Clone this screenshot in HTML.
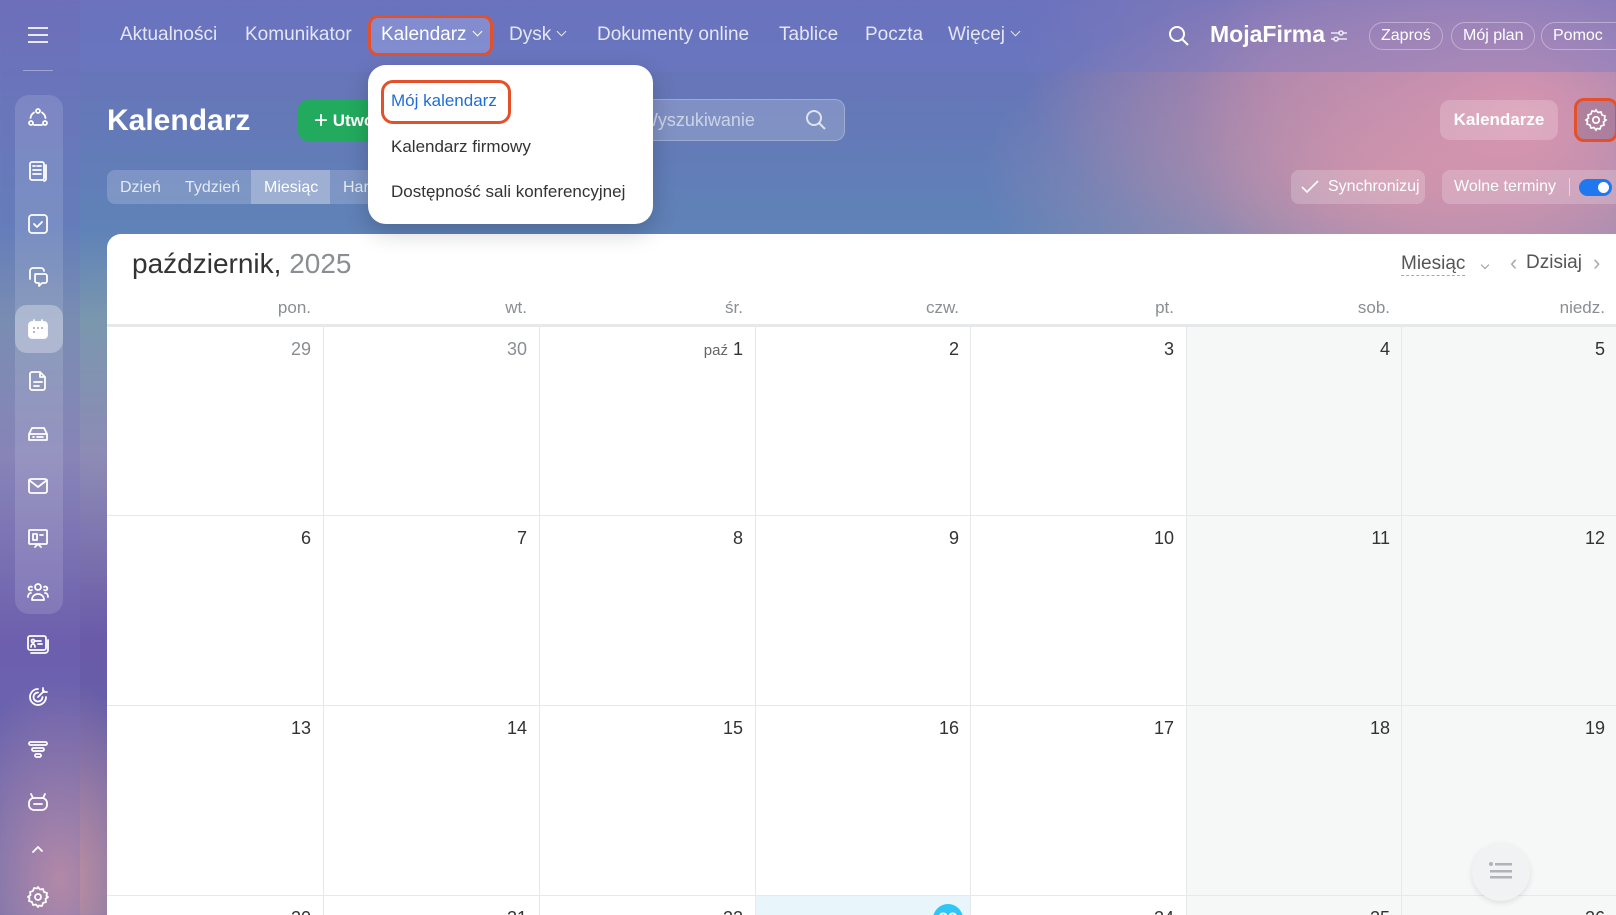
<!DOCTYPE html>
<html style="overflow:hidden;width:1616px;height:915px"><head><meta charset="utf-8"><style>
*{box-sizing:border-box;margin:0;padding:0}
body{width:1616px;height:915px;overflow:hidden;position:relative;font-family:"Liberation Sans",sans-serif;
background:
radial-gradient(ellipse 330px 260px at 1520px 120px,rgba(220,150,175,.95),rgba(200,140,170,0) 100%),
radial-gradient(ellipse 420px 200px at 1400px 180px,rgba(215,150,165,.8),rgba(200,140,170,0) 100%),
radial-gradient(ellipse 260px 180px at 1280px 60px,rgba(170,130,170,.7),rgba(170,130,170,0)),
radial-gradient(ellipse 120px 200px at 60px 880px,rgba(210,150,160,.9),rgba(210,150,160,0)),
linear-gradient(180deg,#6a6fb8 0%,#5f82b8 25%,#7a97ae 35%,#8d8bb5 50%,#6a5aa8 70%,#5a6aa8 100%);}
.top{position:absolute;left:80px;top:0;right:0;height:72px;background:rgba(110,120,200,.35)}
.side{position:absolute;left:0;top:0;width:80px;height:915px;background:rgba(120,110,190,.25)}
.nav{position:absolute;top:24px;font-size:19px;color:rgba(255,255,255,.82);white-space:nowrap}
.chev{display:inline-block;width:7px;height:7px;border-right:1.5px solid currentColor;border-bottom:1.5px solid currentColor;transform:rotate(45deg);margin-left:7px;position:relative;top:-5px}
.pill{position:absolute;top:22px;height:28px;border:1px solid rgba(255,255,255,.35);border-radius:14px;color:#fff;font-size:16px;line-height:26px;padding:0 11px;white-space:nowrap}
.ic{position:absolute;left:26px;width:24px;height:24px}
.ic svg{width:24px;height:24px;fill:none;stroke:#fff;stroke-width:1.8;stroke-linecap:round;stroke-linejoin:round}
.card{position:absolute;left:107px;top:234px;width:1509px;height:681px;background:#fff;border-radius:14px 0 0 0;overflow:hidden}
.dn{position:absolute;top:64px;font-size:17px;color:#8a8e93;text-align:right;width:204px}
.cell{position:absolute;border-left:1px solid #e6e8ea;border-top:1px solid #e6e8ea;height:190px;width:216px}
.num{position:absolute;right:12px;top:12px;font-size:18px;color:#333}
</style></head><body>
<div class="side"></div>
<div class="top"></div>
<div style="position:absolute;left:28px;top:27px;width:20px;height:16px;border-top:2px solid #fff;border-bottom:2px solid #fff;opacity:.85"><div style="margin-top:5px;height:2px;background:#fff"></div></div>
<div style="position:absolute;left:23px;top:70px;width:30px;height:1px;background:rgba(255,255,255,.35)"></div>
<div style="position:absolute;left:15px;top:95px;width:48px;height:519px;border-radius:14px;background:rgba(255,255,255,.13)"></div>
<div style="position:absolute;left:15px;top:305px;width:48px;height:48px;border-radius:12px;background:rgba(255,255,255,.3)"></div>
<div class="ic" style="top:106px"><svg viewBox="0 0 24 24"><circle cx="12" cy="5" r="2"/><circle cx="5" cy="17" r="2"/><circle cx="19" cy="17" r="2"/><path d="M8 6.5A8 8 0 0 0 4.5 12M16 6.5A8 8 0 0 1 19.5 12M8 19h8"/></svg></div>
<div class="ic" style="top:159px"><svg viewBox="0 0 24 24"><rect x="4" y="3" width="14" height="18" rx="2"/><path d="M20 6v14a2 2 0 0 1-2 2M7 7h2M11 7h4M7 11h8M7 15h8"/></svg></div>
<div class="ic" style="top:212px"><svg viewBox="0 0 24 24"><rect x="3" y="3" width="18" height="18" rx="3"/><path d="M8 12l3 3 5-5"/></svg></div>
<div class="ic" style="top:264px"><svg viewBox="0 0 24 24"><path d="M4 15V7a3 3 0 0 1 3-3h8a3 3 0 0 1 3 3M9 10h10a2 2 0 0 1 2 2v5a2 2 0 0 1-2 2h-3l-3 3v-3h-2a2 2 0 0 1-2-2v-5a2 2 0 0 1 2-2z"/></svg></div>
<div class="ic" style="top:317px"><svg viewBox="0 0 24 24"><rect x="3" y="5" width="18" height="16" rx="3" fill="#fff"/><path d="M8 3v4M16 3v4"/><circle cx="8" cy="11" r="1" fill="#a89fc5" stroke="none"/><circle cx="12" cy="11" r="1" fill="#a89fc5" stroke="none"/><circle cx="16" cy="11" r="1" fill="#a89fc5" stroke="none"/><circle cx="8" cy="15" r="1" fill="#a89fc5" stroke="none"/></svg></div>
<div class="ic" style="top:369px"><svg viewBox="0 0 24 24"><path d="M6 3h8l5 5v11a2 2 0 0 1-2 2H6a2 2 0 0 1-2-2V5a2 2 0 0 1 2-2zM14 3v5h5M8 13h8M8 17h5"/></svg></div>
<div class="ic" style="top:422px"><svg viewBox="0 0 24 24"><path d="M3 12l3-6h12l3 6v6H3zM3 12h18M7 15h1M11 15h6"/></svg></div>
<div class="ic" style="top:474px"><svg viewBox="0 0 24 24"><rect x="3" y="5" width="18" height="14" rx="2"/><path d="M3 6l9 7 9-7"/></svg></div>
<div class="ic" style="top:527px"><svg viewBox="0 0 24 24"><rect x="3" y="3" width="18" height="14" rx="1"/><path d="M7 7h4v6H7zM14 8h3M9 20l3-3 3 3"/></svg></div>
<div class="ic" style="top:580px"><svg viewBox="0 0 24 24"><circle cx="12" cy="7" r="3"/><path d="M6 20c0-4 3-6 6-6s6 2 6 6zM6 10a2 2 0 1 1 0-3M18 10a2 2 0 1 0 0-3M2 17c0-2 1-4 3-4M22 17c0-2-1-4-3-4"/></svg></div>
<div class="ic" style="top:632px"><svg viewBox="0 0 24 24"><rect x="2" y="4" width="18" height="14" rx="2"/><path d="M22 8v10a3 3 0 0 1-3 3H5M9 9h6M12 12h4M5 15c0-2 1-3 2-3s2 1 2 3"/><circle cx="7" cy="9" r="1.5"/></svg></div>
<div class="ic" style="top:685px"><svg viewBox="0 0 24 24"><path d="M20 12a8 8 0 1 1-8-8M16.5 12a4.5 4.5 0 1 1-4.5-4.5M12 12l6-6M17 3v4h4"/></svg></div>
<div class="ic" style="top:737px"><svg viewBox="0 0 24 24"><rect x="3" y="5" width="18" height="3" rx="1.5"/><rect x="6" y="11" width="12" height="3" rx="1.5"/><rect x="9" y="17" width="6" height="3" rx="1.5"/></svg></div>
<div class="ic" style="top:789px"><svg viewBox="0 0 24 24"><rect x="3" y="9" width="18" height="12" rx="5"/><path d="M7 9L5 5M17 9l2-4M8 15h8"/></svg></div>
<div class="ic" style="top:837px"><svg viewBox="0 0 24 24"><path d="M7 15l5-5 4 4"/></svg></div>
<div class="ic" style="top:885px"><svg viewBox="0 0 24 24"><circle cx="12" cy="12" r="3"/><path d="M12 2l2 2.5 3-.5 1 3 3 1-.5 3L22 12l-2.5 2 .5 3-3 1-1 3-3-.5L12 22l-2-2.5-3 .5-1-3-3-1 .5-3L2 12l2.5-2-.5-3 3-1 1-3 3 .5z"/></svg></div>

<div class="nav" style="left:120px">Aktualności</div>
<div class="nav" style="left:245px">Komunikator</div>
<div style="position:absolute;left:368px;top:15px;width:125px;height:41px;border:3px solid #e4502a;border-radius:10px;background:rgba(150,160,220,.55)"></div>
<div class="nav" style="left:381px;color:#fff">Kalendarz<span class="chev"></span></div>
<div class="nav" style="left:509px">Dysk<span class="chev"></span></div>
<div class="nav" style="left:597px">Dokumenty online</div>
<div class="nav" style="left:779px">Tablice</div>
<div class="nav" style="left:865px">Poczta</div>
<div class="nav" style="left:948px">Więcej<span class="chev"></span></div>
<svg style="position:absolute;left:1168px;top:25px" width="22" height="22" viewBox="0 0 22 22" fill="none" stroke="#fff" stroke-width="2"><circle cx="9" cy="9" r="7"/><path d="M14 14l6 6"/></svg>
<div style="position:absolute;left:1210px;top:21px;font-size:23px;font-weight:bold;color:#fff">MojaFirma</div>
<svg style="position:absolute;left:1330px;top:28px" width="18" height="16" viewBox="0 0 18 16" fill="none" stroke="rgba(255,255,255,.8)" stroke-width="1.6"><path d="M1 5h16M1 11h16"/><circle cx="11" cy="5" r="2" fill="#8a8ac0"/><circle cx="6" cy="11" r="2" fill="#8a8ac0"/></svg>
<div class="pill" style="left:1369px">Zaproś</div>
<div class="pill" style="left:1451px">Mój plan</div>
<div class="pill" style="left:1541px;width:90px">Pomoc</div>

<div style="position:absolute;left:107px;top:104px;font-size:30px;font-weight:bold;color:#fff">Kalendarz</div>
<div style="position:absolute;left:298px;top:100px;width:120px;height:41px;border-radius:10px;background:#22ab5f;color:#fff;font-weight:bold;font-size:17px;line-height:41px;padding-left:16px"><span style="font-size:24px;font-weight:normal;vertical-align:-2px">+</span> Utwórz</div>
<div style="position:absolute;left:600px;top:99px;width:245px;height:42px;border-radius:10px;background:rgba(255,255,255,.18);border:1px solid rgba(255,255,255,.25);color:rgba(255,255,255,.6);font-size:18px;line-height:40px;padding-left:40px">Wyszukiwanie</div>
<svg style="position:absolute;left:805px;top:109px" width="22" height="22" viewBox="0 0 22 22" fill="none" stroke="rgba(255,255,255,.75)" stroke-width="2"><circle cx="9" cy="9" r="7"/><path d="M14 14l6 6"/></svg>
<div style="position:absolute;left:107px;top:170px;width:300px;height:34px;border-radius:8px;background:rgba(255,255,255,.18)"></div>
<div style="position:absolute;left:251px;top:170px;width:79px;height:34px;background:rgba(255,255,255,.25)"></div>
<div style="position:absolute;left:120px;top:179px;font-size:16px;color:rgba(255,255,255,.8)">Dzień</div>
<div style="position:absolute;left:185px;top:179px;font-size:16px;color:rgba(255,255,255,.8)">Tydzień</div>
<div style="position:absolute;left:264px;top:179px;font-size:16px;color:#fff">Miesiąc</div>
<div style="position:absolute;left:343px;top:179px;font-size:16px;color:rgba(255,255,255,.8)">Harmonogram</div>

<div style="position:absolute;left:1440px;top:100px;width:118px;height:40px;border-radius:10px;background:rgba(255,255,255,.2);color:#fff;font-weight:bold;font-size:17px;line-height:40px;text-align:center">Kalendarze</div>
<div style="position:absolute;left:1574px;top:98px;width:44px;height:44px;border:3px solid #e4502a;border-radius:10px;background:rgba(150,110,140,.5)"></div>
<svg style="position:absolute;left:1584px;top:108px" width="24" height="24" viewBox="0 0 24 24" fill="none" stroke="#fff" stroke-width="1.7"><circle cx="12" cy="12" r="3.2"/><path d="M12 2l2 2.5 3-.5 1 3 3 1-.5 3L22 12l-2.5 2 .5 3-3 1-1 3-3-.5L12 22l-2-2.5-3 .5-1-3-3-1 .5-3L2 12l2.5-2-.5-3 3-1 1-3 3 .5z"/></svg>
<div style="position:absolute;left:1291px;top:170px;width:134px;height:34px;border-radius:8px;background:rgba(255,255,255,.2);color:#fff;font-size:16px;line-height:34px;padding-left:37px">Synchronizuj</div>
<svg style="position:absolute;left:1301px;top:179px" width="18" height="16" viewBox="0 0 18 16" fill="none" stroke="#fff" stroke-width="1.6"><path d="M1 8l5 5L17 2"/></svg>
<div style="position:absolute;left:1442px;top:170px;width:174px;height:34px;border-radius:8px 0 0 8px;background:rgba(255,255,255,.2);color:#fff;font-size:16px;line-height:34px;padding-left:12px">Wolne terminy</div>
<div style="position:absolute;left:1569px;top:178px;width:1px;height:18px;background:rgba(255,255,255,.5)"></div>
<div style="position:absolute;left:1579px;top:179px;width:33px;height:17px;border-radius:9px;background:#1f78f0"><div style="position:absolute;right:3px;top:3px;width:11px;height:11px;border-radius:50%;background:#fff"></div></div>

<div class="card">
<div style="position:absolute;left:25px;top:14px;font-size:28px;color:#333">październik, <span style="color:#8a8e93">2025</span></div>
<div style="position:absolute;left:1294px;top:19px;font-size:19px;color:#555;border-bottom:1px dashed #aaa;line-height:22px">Miesiąc</div>
<span class="chev" style="position:absolute;left:1368px;top:28px;color:#999;width:6px;height:6px"></span>
<span style="position:absolute;left:1403px;top:16px;font-size:22px;color:#aaa">‹</span>
<div style="position:absolute;left:1419px;top:18px;font-size:19px;color:#555">Dzisiaj</div>
<span style="position:absolute;left:1486px;top:16px;font-size:22px;color:#aaa">›</span>
<div class="dn" style="left:0">pon.</div><div class="dn" style="left:216px">wt.</div><div class="dn" style="left:432px">śr.</div><div class="dn" style="left:648px">czw.</div><div class="dn" style="left:863px">pt.</div><div class="dn" style="left:1079px">sob.</div><div class="dn" style="left:1294px">niedz.</div>
<div style="position:absolute;left:0;top:90px;width:1520px;height:2px;background:#e6e8ea"></div>
<div id="g"></div>
</div>
<script>
var g=document.getElementById('g'),h='',xs=[0,216,432,648,863,1079,1294],ys=[92,281,471,661];
var d=[[29,30,1,2,3,4,5],[6,7,8,9,10,11,12],[13,14,15,16,17,18,19],[20,21,22,23,24,25,26]];
for(var r=0;r<4;r++)for(var c=0;c<7;c++){var bg=c>4?'#f6f7f7':'#fff';var t=d[r][c];
if(r==3&&c==3)bg='#e8f6fb';
var col=(r==0&&c<2)?'#8a8e93':'#333';var txt=(r==0&&c==2)?'<span style="font-size:15px;color:#666">paź</span> 1':t;
var hh=r==3?20:190;
var n=(r==3&&c==3)?'<div style="position:absolute;right:8px;top:8px;width:30px;height:30px;border-radius:50%;background:#2fc6f6;color:#fff;font-size:17px;text-align:center;line-height:30px;font-weight:bold">23</div>':'<div class="num" style="color:'+col+'">'+txt+'</div>';
h+='<div class="cell" style="left:'+xs[c]+'px;top:'+ys[r]+'px;height:'+hh+'px;overflow:hidden;background:'+bg+';'+(c==0?'border-left:none;':'')+'">'+n+'</div>';}
g.innerHTML=h;
</script>
<div style="position:absolute;left:1472px;top:843px;width:58px;height:58px;border-radius:50%;background:#f1f2f3;box-shadow:0 2px 6px rgba(0,0,0,.1)"></div>
<svg style="position:absolute;left:1489px;top:862px" width="24" height="18" viewBox="0 0 24 18" fill="#b0b3b8"><circle cx="2" cy="2" r="2"/><rect x="6" y="1" width="17" height="2.5"/><rect x="1" y="8" width="22" height="2.5"/><rect x="1" y="14" width="22" height="2.5"/></svg>

<div style="position:absolute;left:368px;top:65px;width:285px;height:159px;background:#fff;border-radius:18px;box-shadow:0 8px 24px rgba(0,0,0,.2)"></div>
<div style="position:absolute;left:381px;top:80px;width:130px;height:44px;border:3px solid #e4502a;border-radius:12px"></div>
<div style="position:absolute;left:391px;top:91px;font-size:17px;color:#1f6ed4">Mój kalendarz</div>
<div style="position:absolute;left:391px;top:137px;font-size:17px;color:#333">Kalendarz firmowy</div>
<div style="position:absolute;left:391px;top:182px;font-size:17px;color:#333">Dostępność sali konferencyjnej</div>
</body></html>
